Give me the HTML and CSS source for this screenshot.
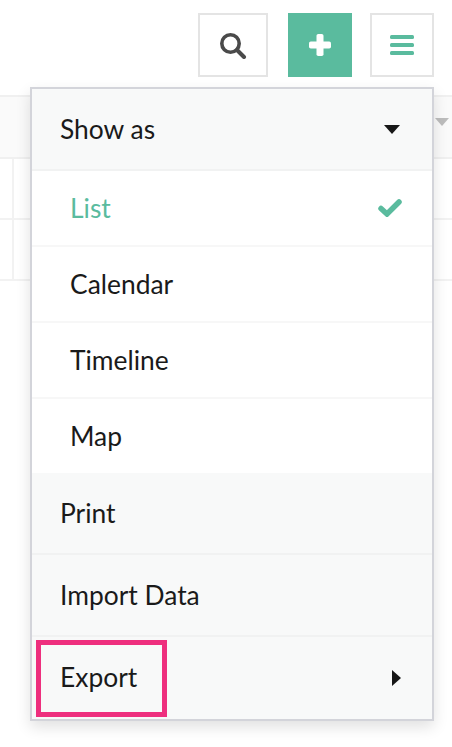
FILE: index.html
```html
<!DOCTYPE html>
<html lang="en">
<head>
<meta charset="utf-8">
<title>View menu</title>
<link rel="stylesheet" href="styles.css">
</head>
<body>
<header class="toolbar">
  <button class="tool tool-search" aria-label="Search">
    <svg width="28" height="28" viewBox="0 0 28 28"><circle cx="11.500" cy="12.500" r="8.700" fill="none" stroke="#4a4a4a" stroke-width="3.600"/><path d="M18 19l7 7" stroke="#4a4a4a" stroke-width="4" stroke-linecap="round"/></svg>
  </button>
  <button class="tool tool-add" aria-label="Add">
    <svg width="22" height="22" viewBox="0 0 22 22" fill="#fff"><rect x="7.500" y="0" width="7" height="22" rx="1.800"/><rect x="0" y="7.500" width="22" height="7" rx="1.800"/></svg>
  </button>
  <button class="tool tool-menu" aria-label="Menu">
    <svg width="24" height="20" viewBox="0 0 24 20" fill="#5abb9e"><rect width="24" height="4" rx="1.500"/><rect y="8" width="24" height="4" rx="1.500"/><rect y="16" width="24" height="4" rx="1.500"/></svg>
  </button>
</header>
<section class="table">
  <div class="table-head"><span class="sort-caret"></span></div>
  <div class="table-row"><span class="cell-first"></span></div>
  <div class="table-row"><span class="cell-first"></span></div>
</section>
<nav class="dropdown">
  <div class="item item-main item-head"><span>Show as</span><span class="caret-down"></span></div>
  <div class="item item-sub active"><span>List</span>
    <svg class="check" width="24" height="18" viewBox="0 0 24 18"><path d="M3 9.500l6 5.500 12-12" fill="none" stroke="#5abb9e" stroke-width="5.500" stroke-linecap="round"/></svg>
  </div>
  <div class="item item-sub"><span>Calendar</span></div>
  <div class="item item-sub"><span>Timeline</span></div>
  <div class="item item-sub last"><span>Map</span></div>
  <div class="item item-main item-print"><span>Print</span></div>
  <div class="item item-main item-import"><span>Import Data</span></div>
  <div class="item item-main item-export"><span>Export</span><span class="caret-right"></span></div>
  <div class="highlight"></div>
</nav>
</body>
</html>
```
FILE: styles.css
```css
* { box-sizing: border-box; }
html, body { margin: 0; padding: 0; }
body {
  position: relative;
  width: 452px;
  height: 747px;
  overflow: hidden;
  background: #fff;
  font-family: Lato, "Open Sans", sans-serif;
  color: #1a1a1a;
}
.toolbar {
  display: flex;
  justify-content: flex-end;
  padding: 13px 18px 0 0;
  height: 95px;
}
.tool {
  display: flex;
  align-items: center;
  justify-content: center;
  width: 64px;
  height: 64px;
  padding: 0;
  background: #fff;
  border: 2px solid #e4e4e4;
}
.tool-search { width: 70px; margin-right: 20px; }
.tool-add { background: #5abb9e; border: 0; margin-right: 18px; }
.table-head {
  position: relative;
  height: 64px;
  background: #fafafa;
  border-top: 2px solid #f0f0f0;
  border-bottom: 2px solid #f0f0f0;
}
.sort-caret {
  position: absolute;
  left: 435px;
  top: 21px;
  border-left: 7px solid transparent;
  border-right: 7px solid transparent;
  border-top: 8px solid #bdbdbd;
}
.table-row {
  height: 61px;
  border-bottom: 2px solid #f2f2f2;
}
.cell-first {
  display: block;
  width: 14px;
  height: 100%;
  border-right: 2px solid #f2f2f2;
}
.dropdown {
  position: absolute;
  left: 30px;
  top: 87px;
  width: 404px;
  height: 634px;
  background: #fff;
  border: 2px solid #d3d4da;
  box-shadow: 0 6px 14px rgba(0, 0, 0, 0.12);
}
.item {
  display: flex;
  align-items: center;
  justify-content: space-between;
  font-size: 26.4px;
  line-height: 30px;
}
.item-sub > span:first-child { margin-bottom: 1px; }
.item-export > span:first-child { margin-bottom: 2px; }
.item-main {
  padding: 0 32px 0 28px;
  background: #f8f9f9;
  border-bottom: 2px solid #f1f2f2;
}
.item-head { height: 82px; }
.item-print { height: 82px; }
.item-import { height: 82px; }
.item-export { height: 82px; border-bottom: 0; }
.item-sub {
  height: 76px;
  padding: 0 32px 0 38px;
  border-bottom: 2px solid #f7f7f7;
}
.item-sub.last { height: 74px; border-bottom: 0; }
.active { color: #5abb9e; }
.check { margin-right: -2px; }
.caret-down {
  border-left: 8px solid transparent;
  border-right: 8px solid transparent;
  border-top: 9px solid #171717;
}
.caret-right {
  margin-right: -1px;
  border-top: 8px solid transparent;
  border-bottom: 8px solid transparent;
  border-left: 9px solid #171717;
}
.highlight {
  position: absolute;
  left: 3.5px;
  top: 550.5px;
  width: 131px;
  height: 77px;
  border: 5px solid #ee2f7e;
}
```
